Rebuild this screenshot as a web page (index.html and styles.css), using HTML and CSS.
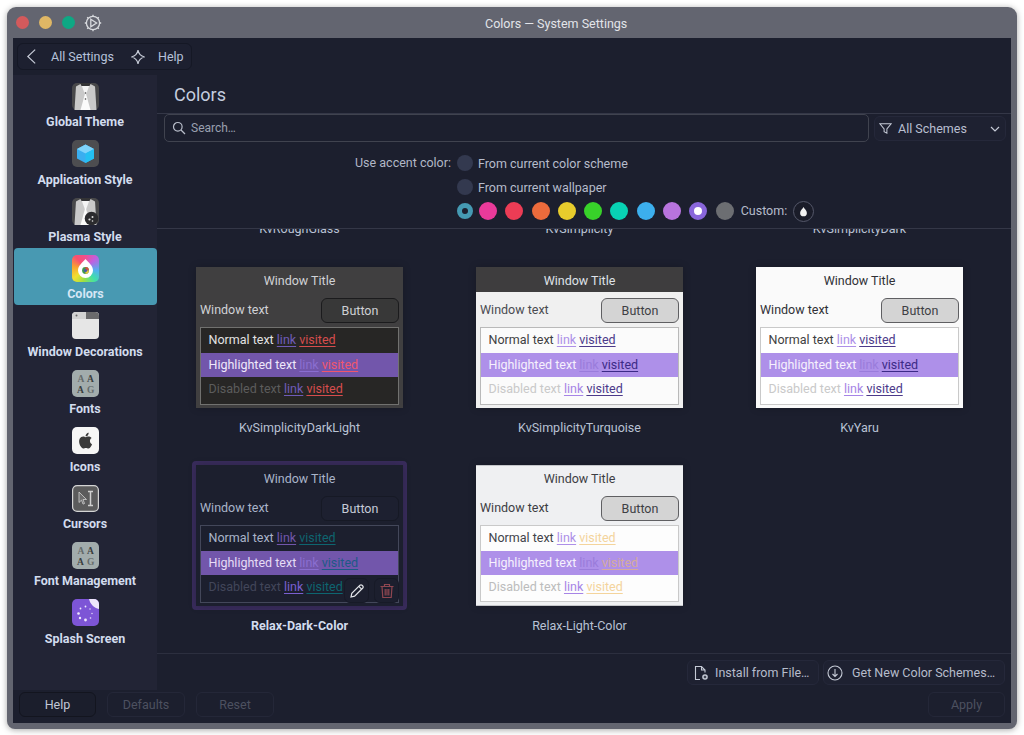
FILE: index.html
```html
<!DOCTYPE html>
<html lang="en">
<head>
<meta charset="utf-8">
<title>Colors — System Settings</title>
<link rel="stylesheet" href="styles.css">
</head>
<body>
<div class="window">
  <header class="titlebar">
    <span class="light red"></span><span class="light amber"></span><span class="light green"></span>
    <svg class="tb-icon" viewBox="0 0 18 18" fill="none" stroke="#d8dade" stroke-width="1.3"><circle cx="9" cy="9" r="6.6"/><path d="M9 .8v1.6M9 15.6v1.6M.8 9h1.6M15.6 9h1.6M3.2 3.2l1.1 1.1M13.7 13.7l1.1 1.1M3.2 14.8l1.1-1.1M13.7 4.3l1.1-1.1"/><path d="M6.8 5.2 12.6 9l-5.8 3.8z"/></svg>
    <span class="tb-title">Colors — System Settings</span>
  </header>
  <div class="client">
    <div class="toolbar">
      <div class="toolgroup">
        <svg class="ti back" viewBox="0 0 12 18" fill="none" stroke="#c5cad6" stroke-width="1.3"><path d="M10 1.5 2 9l8 7.5"/></svg>
        <span class="tl first">All Settings</span>
        <svg class="ti diamond" viewBox="0 0 16 16" fill="none" stroke="#c5cad6" stroke-width="1.2"><path d="M8 1.2c.6 3.6 2.6 5.9 6.6 6.8-4 .9-6 3.2-6.6 6.8-.6-3.6-2.6-5.9-6.6-6.8 4-.9 6-3.2 6.6-6.8z"/></svg>
        <span class="tl">Help</span>
      </div>
    </div>
    <div class="body">
      <nav class="sidebar">
        <a class="cat">
          <svg class="cat-icon" viewBox="0 0 27 27"><rect width="27" height="27" rx="5" fill="#48484a"/><path d="M4 3.5 8.5 1h10L23 3.500l1.500 23.500h-22z" fill="#c9c9c9"/><path d="M9.500 2 13.500 13 17.500 2z" fill="#f4f4f4"/><path d="M8.500 27 13.500 9l5 18z" fill="#fbfbfb"/><path d="M8 0h11l-1.500 3h-8z" fill="#333335"/><circle cx="13.500" cy="10" r=".8" fill="#444"/><circle cx="13.500" cy="16" r=".8" fill="#444"/></svg>
          <span>Global Theme</span>
        </a>
        <a class="cat">
          <svg class="cat-icon" viewBox="0 0 27 27"><rect width="27" height="27" rx="5" fill="#4d4d50"/><path d="M13.500 4.500 22 9v9.500L13.500 23 5 18.500V9z" fill="#3aaef0"/><path d="M13.500 4.500 22 9l-8.500 4.500L5 9z" fill="#7fd4fb"/><path d="M13.500 13.500 22 9v9.500L13.500 23z" fill="#24c0f2"/></svg>
          <span>Application Style</span>
        </a>
        <a class="cat">
          <svg class="cat-icon" viewBox="0 0 27 27"><rect width="27" height="27" rx="5" fill="#48484a"/><path d="M4 3.500 8.500 1h10L23 3.500l1.500 23.500h-22z" fill="#c9c9c9"/><path d="M9.500 2 13.500 13 17.500 2z" fill="#f4f4f4"/><path d="M8.500 27 13.500 9l5 18z" fill="#fbfbfb"/><path d="M8 0h11l-1.500 3h-8z" fill="#333335"/><circle cx="19.500" cy="20.500" r="6.800" fill="#2b2b2e"/><circle cx="17.500" cy="21.500" r="1.100" fill="#ddd"/><circle cx="20.500" cy="19" r="1" fill="#ddd"/><circle cx="20.500" cy="23" r=".8" fill="#ddd"/></svg>
          <span>Plasma Style</span>
        </a>
        <a class="cat active">
          <span class="rainbow"><svg viewBox="0 0 27 27"><path d="M13.500 4c2.800 3.400 7.500 6.600 7.500 11.500a7.500 7.500 0 0 1-15 0C6 10.600 10.700 7.400 13.500 4z" fill="#fff"/><circle cx="13.500" cy="15.500" r="3.400" fill="#3f9a4e"/><path d="M13.500 12.100a3.400 3.400 0 0 1 3.400 3.400h-3.400z" fill="#d9503f"/><path d="M16.900 15.500a3.400 3.400 0 0 1-3.400 3.400v-3.400z" fill="#e7c23c"/><circle cx="13.500" cy="15.500" r="1.600" fill="#4a5aa8"/></svg></span>
          <span>Colors</span>
        </a>
        <a class="cat">
          <svg class="cat-icon" viewBox="0 0 27 27"><rect width="27" height="27" rx="4" fill="#e6e6e6"/><path d="M4 0h19a4 4 0 0 1 4 4v3H0V4a4 4 0 0 1 4-4z" fill="#d2d2d2"/><path d="M14 0h9a4 4 0 0 1 4 4v3H14z" fill="#6a6a6c"/><circle cx="4.500" cy="3.500" r="1" fill="#666"/></svg>
          <span>Window Decorations</span>
        </a>
        <a class="cat">
          <svg class="cat-icon" viewBox="0 0 27 27"><rect width="27" height="27" rx="5" fill="#a2acac"/><text x="5.500" y="12" class="ft">A</text><text x="15" y="12" class="ft bold">A</text><text x="5" y="23" class="ft bold">A</text><text x="15" y="23" class="ft">G</text></svg>
          <span>Fonts</span>
        </a>
        <a class="cat">
          <svg class="cat-icon" viewBox="0 0 27 27"><rect width="27" height="27" rx="5" fill="#f6f6f6"/><g transform="translate(1.500 1.500)"><path fill="#3a3a3a" d="M16.400 12.600c0-2 1.600-2.900 1.700-3-.9-1.400-2.400-1.600-2.900-1.600-1.200-.1-2.400.7-3 .7s-1.600-.7-2.600-.7c-1.300 0-2.600.8-3.300 2-1.400 2.400-.4 6 1 8 .7 1 1.500 2.100 2.500 2 1 0 1.400-.6 2.600-.6s1.600.6 2.600.6 1.700-1 2.400-2c.8-1.100 1.100-2.200 1.100-2.300 0 0-2.100-.8-2.100-3.100zM14.400 6.700c.5-.7.900-1.600.8-2.500-.8 0-1.700.5-2.300 1.200-.5.6-.9 1.500-.8 2.400.9.100 1.800-.4 2.300-1.100z"/></g></svg>
          <span>Icons</span>
        </a>
        <a class="cat">
          <svg class="cat-icon" viewBox="0 0 27 27"><rect x=".6" y=".6" width="25.800" height="25.800" rx="4.500" fill="#5b5b5c" stroke="#d4d4d4" stroke-width="1.200"/><path d="M7 7l7.500 7.500h-3.500l1.500 4-1.500.6-1.500-4-2.500 2.400z" fill="#6d6d6e" stroke="#cfcfcf" stroke-width=".8"/><path d="M16 6.500h5M16 20.500h5M18.500 6.500v14" stroke="#cfcfcf" stroke-width="1.500" fill="none"/></svg>
          <span>Cursors</span>
        </a>
        <a class="cat">
          <svg class="cat-icon" viewBox="0 0 27 27"><rect width="27" height="27" rx="5" fill="#a2acac"/><text x="5.500" y="12" class="ft">A</text><text x="15" y="12" class="ft bold">A</text><text x="5" y="23" class="ft bold">A</text><text x="15" y="23" class="ft">G</text></svg>
          <span>Font Management</span>
        </a>
        <a class="cat">
          <svg class="cat-icon" viewBox="0 0 27 27"><rect width="27" height="27" rx="5" fill="#7d55d6"/><path d="M17 0h5a5 5 0 0 1 5 5v5C22 9 18 5 17 0z" fill="#ece4fb"/><g fill="#efe8fd"><circle cx="13.500" cy="21" r="1.400"/><circle cx="8" cy="19" r="1.200"/><circle cx="6.500" cy="14.500" r="1.300"/><circle cx="8.500" cy="9.500" r=".9"/><circle cx="13.500" cy="7.500" r=".9"/><circle cx="18" cy="10" r=".7"/><circle cx="20" cy="14.500" r=".7"/><circle cx="18.500" cy="19" r=".8"/></g></svg>
          <span>Splash Screen</span>
        </a>
      </nav>
      <main class="content">
        <h1 class="page-title">Colors</h1>
        <div class="filters">
          <div class="search">
            <svg class="s-icon" viewBox="0 0 14 14" fill="none" stroke="#b8bdca" stroke-width="1.200"><circle cx="5.800" cy="5.800" r="4.300"/><path d="m9 9 4 4"/></svg>
            <span>Search…</span>
          </div>
          <div class="combo">
            <svg class="f-icon" viewBox="0 0 14 14" fill="none" stroke="#c5cad6" stroke-width="1.100"><path d="M1 2h12L8.500 7.500V12l-3-1.500v-3z"/></svg>
            <span>All Schemes</span>
            <svg class="chev" viewBox="0 0 10 6" fill="none" stroke="#c5cad6" stroke-width="1.200"><path d="m1 1 4 4 4-4"/></svg>
          </div>
        </div>
        <div class="accent">
          <span class="accent-label">Use accent color:</span>
          <div class="accent-opts">
            <div class="opt"><span class="radio"></span><span>From current color scheme</span></div>
            <div class="opt"><span class="radio"></span><span>From current wallpaper</span></div>
            <div class="swatches">
              <span class="sw current"></span>
              <span class="sw c1"></span><span class="sw c2"></span><span class="sw c3"></span><span class="sw c4"></span><span class="sw c5"></span><span class="sw c6"></span><span class="sw c7"></span><span class="sw c8"></span>
              <span class="sw c9"></span><span class="sw c10"></span>
              <span class="custom">Custom:</span>
              <span class="drop-btn"><svg viewBox="0 0 12 14"><path d="M6 1c1.300 2.500 4.500 4.800 4.500 8a4.500 4.500 0 0 1-9 0C1.500 5.800 4.700 3.500 6 1z" fill="#f2f2f2"/></svg></span>
            </div>
          </div>
        </div>
        <div class="scroller">
          <div class="grid">
            <div class="peek">KvRoughGlass</div>
            <div class="peek">KvSimplicity</div>
            <div class="peek">KvSimplicityDark</div>

            <figure class="card">
              <div class="frame">
                <div class="pv dl">
                  <div class="pv-title">Window Title</div>
                  <div class="pv-row"><span>Window text</span><span class="pv-btn">Button</span></div>
                  <div class="pv-view">
                    <div class="line">Normal text <u class="ln">link</u> <u class="vs">visited</u></div>
                    <div class="line hl">Highlighted text <u class="ln">link</u> <u class="vs">visited</u></div>
                    <div class="line dis">Disabled text <u class="ln">link</u> <u class="vs">visited</u></div>
                  </div>
                </div>
              </div>
              <figcaption>KvSimplicityDarkLight</figcaption>
            </figure>
            <figure class="card">
              <div class="frame">
                <div class="pv tq">
                  <div class="pv-title">Window Title</div>
                  <div class="pv-row"><span>Window text</span><span class="pv-btn">Button</span></div>
                  <div class="pv-view">
                    <div class="line">Normal text <u class="ln">link</u> <u class="vs">visited</u></div>
                    <div class="line hl">Highlighted text <u class="ln">link</u> <u class="vs">visited</u></div>
                    <div class="line dis">Disabled text <u class="ln">link</u> <u class="vs">visited</u></div>
                  </div>
                </div>
              </div>
              <figcaption>KvSimplicityTurquoise</figcaption>
            </figure>
            <figure class="card">
              <div class="frame">
                <div class="pv ya">
                  <div class="pv-title">Window Title</div>
                  <div class="pv-row"><span>Window text</span><span class="pv-btn">Button</span></div>
                  <div class="pv-view">
                    <div class="line">Normal text <u class="ln">link</u> <u class="vs">visited</u></div>
                    <div class="line hl">Highlighted text <u class="ln">link</u> <u class="vs">visited</u></div>
                    <div class="line dis">Disabled text <u class="ln">link</u> <u class="vs">visited</u></div>
                  </div>
                </div>
              </div>
              <figcaption>KvYaru</figcaption>
            </figure>

            <figure class="card selected">
              <div class="frame">
                <div class="pv rd">
                  <div class="pv-title">Window Title</div>
                  <div class="pv-row"><span>Window text</span><span class="pv-btn">Button</span></div>
                  <div class="pv-view">
                    <div class="line">Normal text <u class="ln">link</u> <u class="vs">visited</u></div>
                    <div class="line hl">Highlighted text <u class="ln">link</u> <u class="vs">visited</u></div>
                    <div class="line dis">Disabled text <u class="ln">link</u> <u class="vs">visited</u></div>
                  </div>
                  <div class="actions">
                    <span class="act"><svg viewBox="0 0 16 16" fill="none" stroke="#e4e6ea" stroke-width="1.200"><path d="M2 14l.8-3.600L11 2.200a1.500 1.500 0 0 1 2 0l.8.8a1.500 1.500 0 0 1 0 2L5.600 13.200z"/><path d="m9.800 3.400 2.800 2.800"/></svg></span>
                    <span class="act"><svg viewBox="0 0 16 16" fill="none" stroke="#8f4650" stroke-width="1.200"><path d="M1.500 3.500h13M5.500 3.500V1.500h5v2M3 3.500l.8 11h8.400l.8-11M6.200 6v6.500M8 6v6.500M9.800 6v6.500"/></svg></span>
                  </div>
                </div>
              </div>
              <figcaption>Relax-Dark-Color</figcaption>
            </figure>
            <figure class="card">
              <div class="frame">
                <div class="pv rl">
                  <div class="pv-title">Window Title</div>
                  <div class="pv-row"><span>Window text</span><span class="pv-btn">Button</span></div>
                  <div class="pv-view">
                    <div class="line">Normal text <u class="ln">link</u> <u class="vs">visited</u></div>
                    <div class="line hl">Highlighted text <u class="ln">link</u> <u class="vs">visited</u></div>
                    <div class="line dis">Disabled text <u class="ln">link</u> <u class="vs">visited</u></div>
                  </div>
                </div>
              </div>
              <figcaption>Relax-Light-Color</figcaption>
            </figure>
          </div>
        </div>
        <div class="actionbar">
          <span class="btn install"><svg viewBox="0 0 16 16" fill="none" stroke="#c5cad6" stroke-width="1.100"><path d="M7 14.500H2.500v-13h6l3.500 3.500v2.500M8.500 1.500V5H12"/><circle cx="12" cy="12" r="2.800" fill="#c5cad6" stroke="none"/><path d="M10.700 12h2.600M12 10.700v2.600" stroke="#1c1f2e"/></svg>Install from File…</span>
          <span class="btn getnew"><svg viewBox="0 0 16 16" fill="none" stroke="#c5cad6" stroke-width="1.100"><circle cx="8" cy="8" r="7"/><path d="M8 4v7.500M5.500 9 8 11.500 10.500 9"/></svg>Get New Color Schemes…</span>
        </div>
      </main>
    </div>
    <footer class="footer">
      <span class="fbtn help">Help</span>
      <span class="fbtn off">Defaults</span>
      <span class="fbtn off">Reset</span>
      <span class="fbtn off apply">Apply</span>
    </footer>
  </div>
</div>
</body>
</html>
```
FILE: styles.css
```css
* { box-sizing: border-box; }
html, body { margin: 0; height: 100%; }
body {
  background: #fff;
  font-family: Roboto, "Liberation Sans", sans-serif;
  font-size: 12.5px;
  color: #c6cbd8;
  padding: 7px 7px 6px;
  overflow: hidden;
}
.window {
  width: 1010px;
  height: 722px;
  background: #636570;
  border-radius: 9px 9px 8px 8px;
  box-shadow: 0 1px 6px rgba(0, 0, 0, .35);
  display: flex;
  flex-direction: column;
}
.titlebar {
  height: 31px;
  flex: none;
  display: flex;
  align-items: center;
  padding-left: 9px;
}
.light { width: 13px; height: 13px; border-radius: 50%; margin-right: 10px; }
.red { background: #d35a5c; }
.amber { background: #dfb765; }
.green { background: #0ea884; }
.tb-icon { width: 18px; height: 18px; margin-left: -1px; }
.tb-title { margin: 2px 0 0 383px; color: #e2e4e9; font-size: 12.5px; }
.client {
  flex: 1;
  margin: 0 6px 6px;
  background: #1c1f2e;
  display: flex;
  flex-direction: column;
  min-height: 0;
}
.toolbar { height: 37px; flex: none; padding: 5px 0 0 4px; }
.toolgroup {
  width: 175px;
  height: 27px;
  border: 1px solid #151825;
  background: #1d2030;
  border-radius: 6px;
  display: flex;
  align-items: center;
  padding-left: 8px;
  color: #b6c2da;
  font-size: 12.5px;
}
.ti.back { width: 11px; height: 17px; }
.tl.first { margin-left: 14px; }
.ti.diamond { width: 16px; height: 16px; margin: 0 12px 0 16px; }
.body { flex: 1; display: flex; min-height: 0; }
.sidebar { width: 144px; flex: none; background: #222435; display: flex; flex-direction: column; padding-top: .8px; }
.cat {
  height: 57.4px;
  flex: none;
  padding-top: 7px;
  display: flex;
  flex-direction: column;
  align-items: center;
  border-radius: 4px;
  font-weight: 700;
  font-size: 12.5px;
  color: #d2dcee;
  line-height: 14px;
}
.cat > span:last-child { margin-top: 5.5px; }
.cat.active { background: #4899b2; color: #d5e6f5; margin-left: 1px; }
.cat-icon { width: 27px; height: 27px; display: block; }
.rainbow {
  width: 27px;
  height: 27px;
  display: block;
  border-radius: 5px;
  background: conic-gradient(#f0508f, #c060e0 45deg, #50b0f0 100deg, #40e0a8 140deg, #a0e040 190deg, #f0e030 230deg, #f8a030 280deg, #f85070 320deg, #f0508f);
}
.rainbow svg { width: 27px; height: 27px; display: block; }
.ft { font-family: "Liberation Serif", serif; font-size: 9.5px; fill: #656b6b; }
.ft.bold { font-weight: 700; fill: #3a3e3e; }
.content { flex: 1; min-width: 0; display: flex; flex-direction: column; }
.page-title {
  margin: 0;
  height: 39px;
  flex: none;
  border-bottom: 1px solid #343747;
  padding: 8.5px 0 0 17px;
  font-size: 18px;
  line-height: 22px;
  font-weight: 400;
  color: #c4cddf;
}
.filters { display: flex; height: 29px; flex: none; padding: 0 5px 0 7px; gap: 5px; }
.search {
  width: 705px;
  height: 28px;
  border: 1px solid #40434f;
  border-radius: 5px;
  display: flex;
  align-items: center;
  padding-left: 7px;
  color: #9aa0b0;
  font-size: 12px;
}
.s-icon { width: 14px; height: 14px; margin-right: 5px; }
.combo {
  width: 132px;
  height: 25px;
  margin-top: 2px;
  border: 1px solid #25283a;
  background: #1e2131;
  border-radius: 6px;
  display: flex;
  align-items: center;
  padding: 0 5px 0 4px;
  color: #b9bfd0;
}
.f-icon { width: 13px; height: 13px; margin-right: 6px; }
.chev { width: 10px; height: 6px; margin-left: auto; }
.accent { flex: none; display: flex; height: 86px; padding: 12px 0 0 198px; border-bottom: 1px solid #343747; }
.accent-label { width: 97px; line-height: 16px; color: #b1b7c6; }
.accent-opts { display: flex; flex-direction: column; margin-left: 5px; }
.opt { display: flex; align-items: center; height: 16px; margin-bottom: 8px; gap: 5px; color: #b6bccb; }
.radio { width: 16px; height: 16px; border-radius: 50%; background: #33394f; }
.swatches { display: flex; align-items: center; height: 20px; margin-top: -2px; }
.sw { width: 18px; height: 18px; border-radius: 50%; margin-right: 8.3px; flex: none; }
.sw.current { width: 16px; height: 16px; border: 5px solid #459ab3; background: #1c1f2e; margin-right: 6px; }
.c1 { background: #ea3a9a; }
.c2 { background: #ec3c55; }
.c3 { background: #ed6b3c; }
.c4 { background: #e8cc2c; }
.c5 { background: #38d22a; }
.c6 { background: #08d2b4; }
.c7 { background: #3cafed; }
.c8 { background: #b874de; }
.c9 { background: #fff; border: 5px solid #8966db; }
.c10 { background: #6c6e72; margin-right: 7px; }
.custom { color: #b6bccb; margin-right: 6px; margin-top: -2px; }
.drop-btn {
  width: 21px;
  height: 21px;
  border: 1px solid #55586a;
  border-radius: 50%;
  background: #1a1c29;
  display: flex;
  align-items: center;
  justify-content: center;
}
.drop-btn svg { width: 9px; height: 11px; }
.scroller { flex: 1; min-height: 0; overflow: hidden; }
.grid {
  display: grid;
  grid-template-columns: repeat(3, 280px);
  padding-left: 39px;
  margin-top: -7px;
}
.peek { grid-row: 1; text-align: center; width: 207px; height: 23px; line-height: 14px; color: #b9c2d4; white-space: nowrap; }
.card { margin: 0; width: 207px; height: 198.2px; padding-top: 22px; }
.frame { position: relative; width: 207px; height: 141px; }
.selected .frame::before {
  content: "";
  position: absolute;
  inset: -4px;
  border: 4px solid #392c5c;
  border-radius: 4px;
}
figcaption { margin-top: 13px; text-align: center; color: #b9c2d4; line-height: 14px; }
.selected figcaption { font-weight: 700; color: #d2dcee; }
.pv {
  position: relative;
  width: 207px;
  height: 141px;
  padding: 0 4px 0 3.5px;
  font-size: 12.5px;
  display: flex;
  flex-direction: column;
  box-shadow: 0 0 8px rgba(0, 0, 0, .2);
}
.pv-title { height: 25px; margin: 0 -4px 0 -3.5px; padding-top: 1px; display: flex; align-items: center; justify-content: center; }
.pv-row { height: 35px; display: flex; align-items: center; justify-content: space-between; padding-left: .5px; }
.pv-btn {
  width: 78px;
  height: 25px;
  border-radius: 6px;
  border: 1px solid;
  display: flex;
  align-items: center;
  justify-content: center;
  margin-top: 1px;
  padding-top: 1px;
}
.pv-view { flex: none; height: 78px; border: 1px solid; }
.line { height: 25px; line-height: 24px; padding-left: 8px; white-space: nowrap; }
.line.hl { height: 24px; line-height: 23px; }
.line u { text-underline-offset: 2px; text-decoration-thickness: 1px; }

.dl { background: #403f40; color: #d0d2d6; }
.dl .pv-btn { background: #383838; border-color: #1b1b1d; color: #cfd0d4; }
.dl .pv-view { background: #272625; border-color: #71716f; color: #e2e2e2; }
.dl .ln { color: #6f5bb8; }
.dl .vs { color: #d64d4d; }
.dl .hl { background: #7256ab; color: #efe8fb; }
.dl .hl .ln { color: #8a6ed0; }
.dl .hl .vs { color: #f0566d; }
.dl .dis { color: #5c5c5c; }

.tq, .ya, .rl { background: #f0f0f0; color: #4a4b50; }
.tq .pv-title { background: #3e3d3e; color: #dfe2e8; }
.tq .pv-btn, .ya .pv-btn, .rl .pv-btn { background: #d4d4d4; border-color: #5f5f62; color: #3e3f44; border-width: 1.5px; }
.tq .pv-view, .ya .pv-view { background: #fbfbfb; border-color: #b9b9b9; color: #3f3f42; }
.tq .ln, .ya .ln { color: #ad8fe8; }
.tq .vs, .ya .vs { color: #4c3a8a; }
.tq .hl, .ya .hl { background: #ae90e9; color: #f6f1fd; }
.tq .hl .ln, .ya .hl .ln { color: #9a7cdb; }
.tq .hl .vs, .ya .hl .vs { color: #3c2a86; }
.tq .dis, .ya .dis { color: #c9c9c9; }
.tq .dis .ln, .ya .dis .ln { color: #a684e6; }

.ya { background: #fafafa; color: #303136; }
.ya .pv-view { background: #fff; border-color: #c9c9c9; }

.rd { background: #1c1f2e; color: #a9b4c9; }
.rd .pv-btn { background: #1d2030; border-color: #161925; color: #c6cbd8; }
.rd .pv-view { background: #1c1f2e; border-color: #43475a; color: #a9b4c9; }
.rd .ln { color: #7256ab; }
.rd .vs { color: #0e6570; }
.rd .hl { background: #7256ab; color: #e6dcf6; }
.rd .hl .ln { color: #8a6ed0; }
.rd .hl .vs { color: #1d5a86; }
.rd .dis { color: #42465a; }
.rd .dis .ln { color: #7a5fd0; }

.rl { background: #eff0f2; color: #3d3e44; border: 1px solid #c4c5c9; border-width: 1px 0; }
.rl .pv-title { height: 24px; }
.rl .pv-view { background: #fdfdfd; border-color: #c9c9c9; color: #42434a; height: 77px; }
.rl .ln { color: #ad8fe8; }
.rl .vs { color: #f4d49c; }
.rl .hl { background: #ae90e9; color: #f6f1fd; }
.rl .hl .ln { color: #9a7cdb; }
.rl .hl .vs { color: #d4ab9c; }
.rl .dis { color: #bcbcbc; }
.rl .dis .ln { color: #a684e6; }

.actions { position: absolute; right: 4px; bottom: 3px; display: flex; gap: 5px; }
.act {
  width: 25px;
  height: 25px;
  background: #1c1f2e;
  border: 1px solid #171a27;
  border-radius: 6px;
  display: flex;
  align-items: center;
  justify-content: center;
}
.act svg { width: 16px; height: 16px; }
.actionbar { height: 37px; flex: none; display: flex; justify-content: flex-end; gap: 4px; padding: 6px 6px 0 0; border-top: 1px solid #2c2f3f; }
.btn {
  height: 25px;
  border: 1px solid #25283a;
  background: #1e2131;
  border-radius: 6px;
  display: flex;
  align-items: center;
  color: #b6bccb;
  padding-left: 5px;
}
.btn svg { width: 16px; height: 16px; margin-right: 6px; }
.install { width: 132px; }
.getnew { width: 182px; padding-left: 3px; }
.getnew svg { margin-right: 9px; }
.footer { height: 33px; flex: none; display: flex; align-items: flex-start; padding: 2px 6px 0; background: #1c1f2e; gap: 11px; }
.fbtn {
  height: 25px;
  width: 78px;
  border: 1px solid #25283a;
  background: #1c1f2e;
  border-radius: 6px;
  display: flex;
  align-items: center;
  justify-content: center;
  color: #c2c8d6;
}
.fbtn.help { width: 77px; border-color: #13151f; background: #1b1e2c; }
.fbtn.off { color: #4d5160; border-color: #242738; }
.fbtn.apply { margin-left: auto; width: 77px; }
```
